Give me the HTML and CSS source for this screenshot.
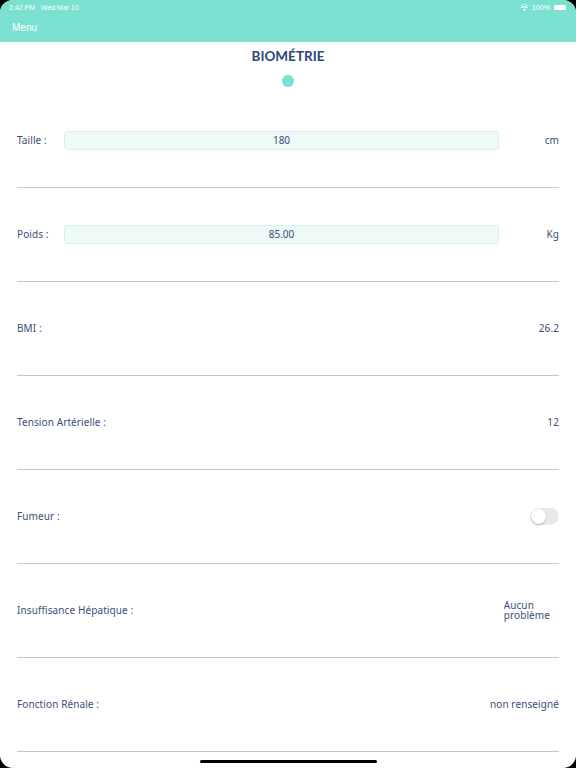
FILE: index.html
```html
<!DOCTYPE html>
<html lang="fr">
<head>
<meta charset="utf-8">
<link rel="stylesheet" href="styles.css">
</head>
<body>
<div class="screen">
  <header class="nav">
    <div class="status">
      <span class="time">1:42 PM&nbsp;&nbsp;&nbsp;Wed Mar 10</span>
      <span class="sys">
        <svg class="wifi" width="9" height="7" viewBox="0 0 18 14"><path d="M9 14l3-3.6a5 5 0 0 0-6 0z M9 6.5a8 8 0 0 1 5.2 1.9l1.7-2A10.8 10.8 0 0 0 9 3.8 10.8 10.8 0 0 0 2.1 6.4l1.7 2A8 8 0 0 1 9 6.5z M9 1a13.5 13.5 0 0 1 8.6 3.1L18 3.6A14.7 14.7 0 0 0 9 0 14.7 14.7 0 0 0 0 3.6l.4.5A13.5 13.5 0 0 1 9 1z" fill="#fff"/></svg>
        <span>100%</span>
        <span class="battery"></span>
      </span>
    </div>
    <div class="navbar"><span class="menu">Menu</span></div>
  </header>
  <main class="content">
    <h1 class="title">BIOMÉTRIE</h1>
    <div class="dot"></div>
    <div class="rows">
      <div class="row"><div class="row-main"><span class="label short">Taille :</span><div class="field">180</div><span class="value unit">cm</span></div></div>
      <div class="row"><div class="row-main"><span class="label short">Poids :</span><div class="field">85.00</div><span class="value unit">Kg</span></div></div>
      <div class="row"><div class="row-main"><span class="label">BMI :</span><span class="spacer"></span><span class="value">26.2</span></div></div>
      <div class="row"><div class="row-main"><span class="label">Tension Artérielle :</span><span class="spacer"></span><span class="value">12</span></div></div>
      <div class="row"><div class="row-main"><span class="label">Fumeur :</span><span class="spacer"></span><span class="toggle"><span class="knob"></span></span></div></div>
      <div class="row"><div class="row-main"><span class="label">Insuffisance Hépatique :</span><span class="spacer"></span><span class="value multi">Aucun<br>problème</span></div></div>
      <div class="row"><div class="row-main"><span class="label">Fonction Rénale :</span><span class="spacer"></span><span class="value">non renseigné</span></div></div>
    </div>
  </main>
  <div class="home-indicator"></div>
</div>
</body>
</html>
```
FILE: styles.css
```css
* { box-sizing: border-box; }
html, body { margin: 0; padding: 0; background: #000; }
body { width: 576px; height: 768px; overflow: hidden; font-family: "Noto Sans", sans-serif; }
.screen {
  position: relative;
  width: 576px; height: 768px;
  background: #fff;
  border-radius: 13px;
  overflow: hidden;
}
.nav { background: #7ae1d1; height: 42px; color: #fff; }
.status {
  height: 14px;
  display: flex; justify-content: space-between; align-items: center;
  padding: 0 10px 0 9px;
  font-family: "Liberation Sans", sans-serif;
  font-size: 7px;
}
.sys { display: flex; align-items: center; gap: 3px; }
.battery {
  width: 12px; height: 5px; border-radius: 1.5px;
  background: #fff; display: inline-block; margin-left: 1px;
}
.navbar { height: 28px; display: flex; align-items: center; padding-left: 12px; }
.menu { font-family: "Liberation Sans", sans-serif; font-size: 10px; color: #fff; margin-top: -1px; }
.content { display: flex; flex-direction: column; align-items: center; }
.title {
  margin: 7px 0 0; font-size: 13.5px; font-weight: 700; color: #2c4677;
  font-family: Lato, sans-serif; line-height: 14px;
}
.dot { width: 12px; height: 12px; border-radius: 50%; background: #7ae1d1; margin-top: 12px; }
.rows { width: 100%; padding: 0 17px; margin-top: 7px; }
.row {
  height: 94px;
  border-bottom: 1px solid #c7c7c7;
  display: flex; flex-direction: column;
}
.row-main { display: flex; align-items: center; margin-top: 36px; min-height: 20px; }
.label { font-size: 10px; color: #3a4d79; white-space: nowrap; letter-spacing: 0.1px; }
.label.short { width: 47px; }
.field {
  flex: 1; height: 19px;
  background: #eefaf8; border: 1px solid #dbeeeb; border-radius: 3px;
  display: flex; align-items: center; justify-content: center;
  font-size: 10px; color: #3a4d79;
}
.spacer { flex: 1; }
.value { font-size: 10px; color: #3a4d79; white-space: nowrap; letter-spacing: 0.1px; }
.value.unit { width: 60px; text-align: right; }
.value.multi { line-height: 10px; margin-right: 9px; }
.toggle {
  position: relative; width: 29px; height: 17px; border-radius: 9px; background: #e9e9eb;
}
.knob {
  position: absolute; left: 1px; top: 1px; width: 15px; height: 15px; border-radius: 50%;
  background: #fff; box-shadow: 0 1px 2px rgba(0,0,0,0.25);
}
.home-indicator {
  position: absolute; left: 200px; bottom: 5px; width: 177px; height: 3px;
  border-radius: 2px; background: #000;
}
```
